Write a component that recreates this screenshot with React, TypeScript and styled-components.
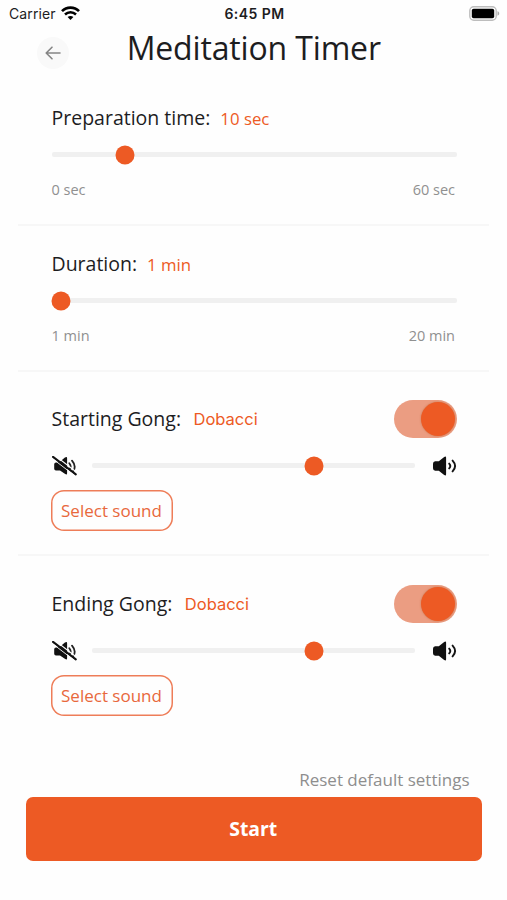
import React from 'react';
import styled, { createGlobalStyle } from 'styled-components';

const ORANGE = '#ed5a24';

const GlobalStyle = createGlobalStyle`
  * { box-sizing: border-box; }
  html, body { margin: 0; padding: 0; background: #fefefe; }
  button { font: inherit; padding: 0; border: 0; background: none; cursor: pointer; }
`;

const Screen = styled.main`
  width: 507px;
  height: 900px;
  overflow: hidden;
  display: flex;
  flex-direction: column;
  background: #fefefe;
  color: #1d1d1f;
  font-family: 'Open Sans', sans-serif;
`;

const StatusBar = styled.div`
  display: grid;
  grid-template-columns: 1fr auto 1fr;
  align-items: center;
  height: 28px;
  padding: 0 7px 0 9px;
  font-family: Inter, sans-serif;
  font-size: 14px;
  line-height: 18px;
`;

const Carrier = styled.div`
  display: flex;
  align-items: center;
  gap: 5.5px;
  letter-spacing: 0.1px;
`;

const Clock = styled.div`
  font-weight: 600;
  font-size: 14px;
  letter-spacing: 0.45px;
`;

const WifiIcon = styled.svg`
  margin-top: -2px;
`;

const BatteryIcon = styled.svg`
  justify-self: end;
  margin-top: -1px;
`;

const Header = styled.header`
  display: grid;
  grid-template-columns: 32px 1fr 32px;
  align-items: start;
  height: 54px;
  padding: 0 36.5px 0 37px;
`;

const BackButton = styled.button`
  display: grid;
  place-items: center;
  width: 32px;
  height: 32px;
  margin-top: 9px;
  border-radius: 50%;
  background: #f9f9f9;
`;

const Title = styled.h1`
  margin: 0;
  text-align: center;
  font-size: 32px;
  font-weight: 400;
  letter-spacing: -0.15px;
  line-height: 40px;
  white-space: nowrap;
`;

const Section = styled.section<{ $height: number; $last?: boolean }>`
  height: ${(p) => p.$height}px;
  margin: 0 18px;
  padding: 0 32px 0 33.5px;
  border-bottom: 2px solid ${(p) => (p.$last ? 'transparent' : '#f7f7f7')};
`;

const LabelRow = styled.div<{ $top: number }>`
  display: flex;
  align-items: center;
  height: 38px;
  margin-top: ${(p) => p.$top}px;
`;

const Label = styled.span`
  font-size: 19.5px;
  line-height: 26px;
  white-space: nowrap;
`;

const Value = styled.span<{ $sans?: boolean }>`
  flex: 1;
  margin-left: ${(p) => (p.$sans ? 12.5 : 10)}px;
  padding-top: ${(p) => (p.$sans ? 0 : 1)}px;
  color: ${ORANGE};
  font-family: ${(p) => (p.$sans ? 'Inter' : "'Open Sans'")}, sans-serif;
  font-size: ${(p) => (p.$sans ? 16.5 : 16.8)}px;
  line-height: 26px;
`;

const Track = styled.div`
  position: relative;
  flex: 1;
  height: 5px;
  border-radius: 2px;
  background: #f0f0f0;
`;

const Thumb = styled.span`
  position: absolute;
  top: 50%;
  width: 19px;
  height: 19px;
  border-radius: 50%;
  background: ${ORANGE};
  transform: translate(-50%, -50%);
`;

const SliderRow = styled.div`
  display: flex;
  align-items: center;
  height: 19px;
  margin-top: 8px;
`;

const RangeLabels = styled.div`
  display: flex;
  justify-content: space-between;
  margin-top: 16px;
  padding-right: 2px;
  color: #909090;
  font-size: 14.5px;
  line-height: 20px;
`;

const VolumeRow = styled.div`
  display: flex;
  align-items: center;
  height: 20px;
  margin-top: 18px;
`;

const MuteSvg = styled.svg`
  margin-right: 15.5px;
`;

const SpeakerSvg = styled.svg`
  margin-left: 17.5px;
`;

const Switch = styled.button`
  display: flex;
  justify-content: flex-end;
  align-items: center;
  width: 63px;
  height: 38px;
  padding-right: 2px;
  border-radius: 19px;
  background: #eb9d82;
`;

const SwitchKnob = styled.span`
  width: 34px;
  height: 34px;
  border-radius: 50%;
  background: ${ORANGE};
  box-shadow: 0 0 2px rgba(170, 90, 40, 0.6);
`;

const SelectButton = styled.button`
  display: block;
  width: 122px;
  height: 41px;
  margin: 14px 0 0 -0.5px;
  padding-right: 1px;
  border-radius: 13px;
  box-shadow: inset 0 0 0 1.5px #ee7d58;
  color: #e8683c;
  font-size: 17px;
  line-height: 41px;
  white-space: nowrap;
`;

const Footer = styled.footer`
  display: flex;
  flex-direction: column;
  padding: 0 25.5px 0 26px;
`;

const Reset = styled.button`
  align-self: flex-end;
  margin-right: 12px;
  color: #8e8e8e;
  font-size: 17px;
  line-height: 24px;
`;

const Start = styled.button`
  height: 64px;
  margin-top: 5px;
  padding: 0 1px 0 0;
  border-radius: 7px;
  background: ${ORANGE};
  color: #fff;
  font-size: 19.4px;
  font-weight: 700;
  line-height: 64px;
`;

function Wifi() {
  return (
    <WifiIcon width="19" height="15" viewBox="0 0 19 15" fill="none">
      <path d="M1 5.1C5.7.4 13.3.4 18 5.1" stroke="#000" strokeWidth="2.7" />
      <path d="M4 8.5c3.1-3 7.9-3 11 0" stroke="#000" strokeWidth="2.5" />
      <path d="M6.6 11.1c1.7-1.5 4.1-1.5 5.8 0L9.5 14z" fill="#000" />
    </WifiIcon>
  );
}

function Battery() {
  return (
    <BatteryIcon width="31" height="15" viewBox="0 0 31 15">
      <rect x=".8" y=".8" width="26.4" height="13.4" rx="4" fill="#fff" stroke="#bdbdbd" strokeWidth="1.4" />
      <rect x="2.8" y="2.8" width="22.4" height="9.4" rx="1.8" fill="#000" />
      <path d="M28.5 5.3c2.3.7 2.3 3.7 0 4.4z" fill="#aaa" />
    </BatteryIcon>
  );
}

function BackArrow() {
  return (
    <svg width="16" height="14" viewBox="0 0 16 14" fill="none" stroke="#858585" strokeWidth="1.6" strokeLinecap="round" strokeLinejoin="round">
      <path d="M15 7H1.3M7 1.2 1.2 7 7 12.8" />
    </svg>
  );
}

function Muted() {
  return (
    <MuteSvg width="25" height="20" viewBox="0 0 25 20" fill="none">
      <path d="M2.2 8.2Q2.2 6.4 4 6.4L8.5 5.2l4.4-3.6q2.2-1.6 2.2.6v15q0 2.2-1.9.9L8 14.6H4q-1.8 0-1.8-1.8z" fill="#111" />
      <path d="M17.3 7.2q2.4 3 .6 5.6M20 4.6q4.6 5.2 1.4 10.4" stroke="#222" strokeWidth="1.8" strokeLinecap="round" />
      <path d="M2.8-.6 25 16.5" stroke="#fefefe" strokeWidth="1.1" />
      <path d="M1 .9 23.8 18.4" stroke="#111" strokeWidth="2.1" strokeLinecap="round" />
      <path d="M0 2.3 22.8 19.8" stroke="#fefefe" strokeWidth=".9" />
    </MuteSvg>
  );
}

function Speaker() {
  return (
    <SpeakerSvg width="25" height="20" viewBox="0 0 25 20" fill="none">
      <path d="M1 7.7Q1 5.2 3.2 5.2h3.6L12.2.9q1.9-1.3 1.9.8v16.6q0 2.1-1.9.8l-5.4-4.4H3.2q-2.2 0-2.2-2.4z" fill="#111" />
      <path d="M17.2 7.6q2.2 2.4 0 4.8M20.6 4.6q5 5.4 0 10.8" stroke="#151515" strokeWidth="1.9" strokeLinecap="round" />
    </SpeakerSvg>
  );
}

function Slider({ value }: { value: number }) {
  return (
    <Track>
      <Thumb style={{ left: `${value}%` }} />
    </Track>
  );
}

interface TimeProps { label: string; value: string; percent: number; min: string; max: string; top: number; height: number }

function TimeSection({ label, value, percent, min, max, top, height }: TimeProps) {
  return (
    <Section $height={height}>
      <LabelRow $top={top}>
        <Label>{label}</Label>
        <Value>{value}</Value>
      </LabelRow>
      <SliderRow><Slider value={percent} /></SliderRow>
      <RangeLabels><span>{min}</span><span>{max}</span></RangeLabels>
    </Section>
  );
}

function GongSection({ label, top, height, last }: { label: string; top: number; height: number; last?: boolean }) {
  return (
    <Section $height={height} $last={last}>
      <LabelRow $top={top}>
        <Label>{label}</Label>
        <Value $sans>Dobacci</Value>
        <Switch role="switch" aria-checked="true" aria-label={label}><SwitchKnob /></Switch>
      </LabelRow>
      <VolumeRow>
        <Muted />
        <Slider value={68.9} />
        <Speaker />
      </VolumeRow>
      <SelectButton>Select sound</SelectButton>
    </Section>
  );
}

export default function App() {
  return (
    <>
      <GlobalStyle />
      <Screen>
        <StatusBar>
          <Carrier>Carrier<Wifi /></Carrier>
          <Clock>6:45 PM</Clock>
          <Battery />
        </StatusBar>
        <Header>
          <BackButton aria-label="Back"><BackArrow /></BackButton>
          <Title>Meditation Timer</Title>
        </Header>
        <TimeSection label="Preparation time:" value="10 sec" percent={18.1} min="0 sec" max="60 sec" top={17} height={144} />
        <TimeSection label="Duration:" value="1 min" percent={2.3} min="1 min" max="20 min" top={19} height={146} />
        <GongSection label="Starting Gong:" top={27.5} height={184} />
        <GongSection label="Ending Gong:" top={28.5} height={212} last />
        <Footer>
          <Reset>Reset default settings</Reset>
          <Start>Start</Start>
        </Footer>
      </Screen>
    </>
  );
}
